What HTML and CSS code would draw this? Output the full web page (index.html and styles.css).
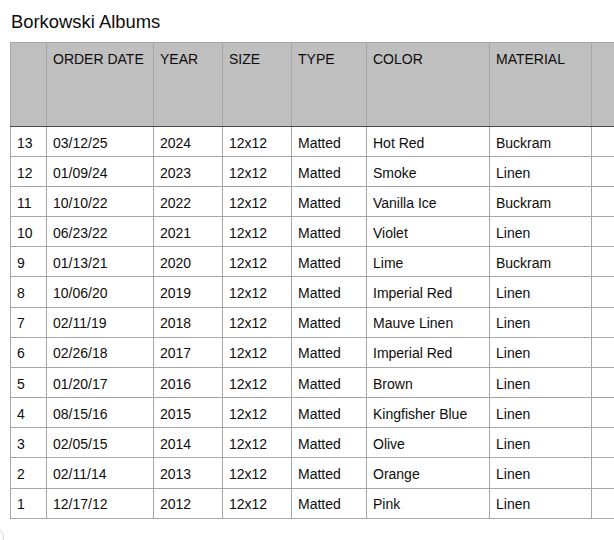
FILE: index.html
```html
<!DOCTYPE html>
<html>
<head>
<meta charset="utf-8">
<link rel="stylesheet" href="styles.css">
</head>
<body>
<div class="page">
  <h1 class="title">Borkowski Albums</h1>
  <table class="sheet">
    <colgroup>
      <col class="c-num"><col class="c-date"><col class="c-year"><col class="c-size"><col class="c-type"><col class="c-color"><col class="c-mat"><col class="c-extra">
    </colgroup>
    <thead>
      <tr><th></th><th>ORDER DATE</th><th>YEAR</th><th>SIZE</th><th>TYPE</th><th>COLOR</th><th>MATERIAL</th><th></th></tr>
    </thead>
    <tbody>
      <tr><td>13</td><td>03/12/25</td><td>2024</td><td>12x12</td><td>Matted</td><td>Hot Red</td><td>Buckram</td><td></td></tr>
      <tr><td>12</td><td>01/09/24</td><td>2023</td><td>12x12</td><td>Matted</td><td>Smoke</td><td>Linen</td><td></td></tr>
      <tr><td>11</td><td>10/10/22</td><td>2022</td><td>12x12</td><td>Matted</td><td>Vanilla Ice</td><td>Buckram</td><td></td></tr>
      <tr><td>10</td><td>06/23/22</td><td>2021</td><td>12x12</td><td>Matted</td><td>Violet</td><td>Linen</td><td></td></tr>
      <tr><td>9</td><td>01/13/21</td><td>2020</td><td>12x12</td><td>Matted</td><td>Lime</td><td>Buckram</td><td></td></tr>
      <tr><td>8</td><td>10/06/20</td><td>2019</td><td>12x12</td><td>Matted</td><td>Imperial Red</td><td>Linen</td><td></td></tr>
      <tr><td>7</td><td>02/11/19</td><td>2018</td><td>12x12</td><td>Matted</td><td>Mauve Linen</td><td>Linen</td><td></td></tr>
      <tr><td>6</td><td>02/26/18</td><td>2017</td><td>12x12</td><td>Matted</td><td>Imperial Red</td><td>Linen</td><td></td></tr>
      <tr><td>5</td><td>01/20/17</td><td>2016</td><td>12x12</td><td>Matted</td><td>Brown</td><td>Linen</td><td></td></tr>
      <tr><td>4</td><td>08/15/16</td><td>2015</td><td>12x12</td><td>Matted</td><td>Kingfisher Blue</td><td>Linen</td><td></td></tr>
      <tr><td>3</td><td>02/05/15</td><td>2014</td><td>12x12</td><td>Matted</td><td>Olive</td><td>Linen</td><td></td></tr>
      <tr><td>2</td><td>02/11/14</td><td>2013</td><td>12x12</td><td>Matted</td><td>Orange</td><td>Linen</td><td></td></tr>
      <tr><td>1</td><td>12/17/12</td><td>2012</td><td>12x12</td><td>Matted</td><td>Pink</td><td>Linen</td><td></td></tr>
    </tbody>
  </table>
</div>
<div class="corner-ring"></div>
</body>
</html>
```

FILE: styles.css
```css
html, body {
  margin: 0;
  padding: 0;
  background: #ffffff;
  overflow: hidden;
}
body {
  width: 614px;
  height: 540px;
  position: relative;
  font-family: "Liberation Sans", Arial, Helvetica, sans-serif;
  color: #0d0d0d;
}
.page {
  padding: 11px 0 0 10px;
}
.title {
  margin: 0 0 10px 1px;
  font-size: 18.4px;
  font-weight: normal;
  line-height: 21px;
  color: #0d0d0d;
}
.sheet {
  border-collapse: collapse;
  table-layout: fixed;
  width: 621px;
  font-size: 14px;
}
.c-num { width: 36px; }
.c-date { width: 107px; }
.c-year { width: 69px; }
.c-size { width: 69px; }
.c-type { width: 75px; }
.c-color { width: 123px; }
.c-mat { width: 102px; }
.c-extra { width: 40px; }
.sheet th,
.sheet td {
  border: 1px solid #a6a6a6;
  padding: 0 6px;
  text-align: left;
  white-space: nowrap;
  overflow: hidden;
}
.sheet th {
  background: #bebfbe;
  font-weight: normal;
  height: 75px;
  vertical-align: top;
  padding-top: 8px;
  line-height: 16px;
  border-bottom: 1px solid #4a4a4a;
}
.sheet td {
  height: 27px;
  line-height: 16px;
  vertical-align: middle;
  padding-top: 2px;
}
.sheet tbody tr:nth-child(3n) td {
  height: 27.45px;
}
.corner-ring {
  position: absolute;
  left: -14px;
  top: 528px;
  width: 16px;
  height: 16px;
  border: 1px solid #d8d8d8;
  border-radius: 50%;
}
```
